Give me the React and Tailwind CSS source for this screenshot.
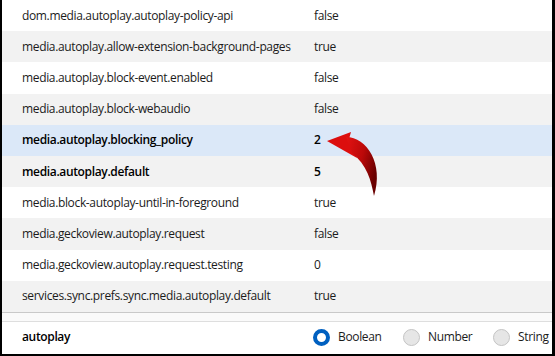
import React from 'react';

const prefs = [
  { name: 'dom.media.autoplay.autoplay-policy-api', value: 'false' },
  { name: 'media.autoplay.allow-extension-background-pages', value: 'true' },
  { name: 'media.autoplay.block-event.enabled', value: 'false' },
  { name: 'media.autoplay.block-webaudio', value: 'false' },
  { name: 'media.autoplay.blocking_policy', value: '2', bold: true, selected: true },
  { name: 'media.autoplay.default', value: '5', bold: true },
  { name: 'media.block-autoplay-until-in-foreground', value: 'true' },
  { name: 'media.geckoview.autoplay.request', value: 'false' },
  { name: 'media.geckoview.autoplay.request.testing', value: '0' },
  { name: 'services.sync.prefs.sync.media.autoplay.default', value: 'true' },
];

function Radio({ label, checked, last }) {
  return (
    <div className={(last ? '' : 'w-[90px] ') + 'shrink-0 flex items-center gap-[8px]'}>
      {checked ? (
        <span className="w-[17px] h-[17px] rounded-full border-[4px] border-[#0060c0] bg-white" />
      ) : (
        <span className="w-[17px] h-[17px] rounded-full border border-[#c4c4c4] bg-[#e6e6e6]" />
      )}
      <span>{label}</span>
    </div>
  );
}

export default function App() {
  return (
    <div
      className="relative w-[555px] h-[356px] flex flex-col bg-white border-l-2 border-r-[3px] border-b-2 border-black text-[12px] tracking-[-0.35px] text-[#1b1b1b]"
      style={{ fontFamily: '"Open Sans", "Noto Sans", sans-serif' }}
    >
      <div className="flex flex-col">
        {prefs.map((p, i) => (
          <div
            key={p.name}
            className={
              'h-[31.2px] flex items-center pl-[20px] ' +
              (p.selected ? 'bg-[#dbe8f8]' : i % 2 === 1 ? 'bg-[#f2f2f2]' : 'bg-white') +
              (p.bold ? ' font-semibold text-black' : '')
            }
          >
            <span className="w-[292px] shrink-0">{p.name}</span>
            <span>{p.value}</span>
          </div>
        ))}
      </div>
      <div className="h-[10px] border-t border-b border-t-[#c9c9c9] border-b-[#dedede] bg-[#fafafa]" />
      <div className="h-[31px] flex items-center pl-[20px]">
        <span className="w-[291px] shrink-0 font-semibold text-black">autoplay</span>
        <div className="flex items-center">
          <Radio label="Boolean" checked />
          <Radio label="Number" />
          <Radio label="String" last />
        </div>
      </div>

      <svg className="absolute left-[318px] top-[128px]" width="66" height="74" viewBox="0 0 66 74">
        <defs>
          <linearGradient id="arrowRed" x1="0" y1="0" x2="1" y2="0.5">
            <stop offset="0" stopColor="#e41212" />
            <stop offset="0.55" stopColor="#bb0909" />
            <stop offset="1" stopColor="#6a0000" />
          </linearGradient>
        </defs>
        <path d="M7 13 L31 4 L29 11 L37 30 Z" fill="#dc0e0e" />
        <path
          d="M26 9 C47 9 64 36 54 68 C51 52 47 37 32 25 Z"
          fill="url(#arrowRed)"
        />
      </svg>
    </div>
  );
}
